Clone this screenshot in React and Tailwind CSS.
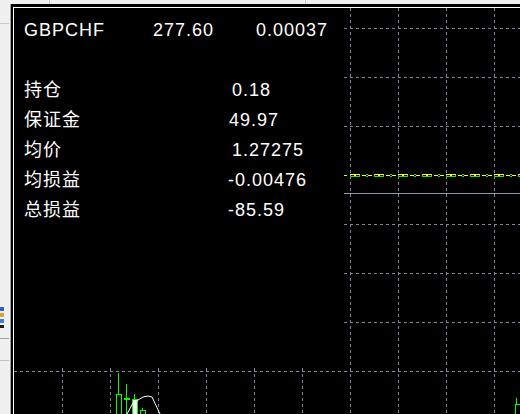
import React from "react";

const GRID = "#778899";

function Chart() {
  const vx = [48, 96, 144, 192, 240, 288, 336, 384, 432, 480];
  const hy = [20, 69, 118, 167, 216, 265, 314, 363];
  const marks = [];
  for (let i = 0; i < 8; i++) {
    const x0 = 336 + 24 * i;
    marks.push(
      <g key={i} shapeRendering="crispEdges">
        <rect x={x0} y={166} width={10} height={1} fill="#ffff00" />
        <rect x={x0} y={168} width={10} height={1} fill="#22dd22" />
        <rect x={x0} y={167} width={1} height={1} fill="#22dd22" />
        <rect x={x0 + 9} y={167} width={1} height={1} fill="#22dd22" />
        <rect x={x0 + 4} y={167} width={2} height={1} fill="#ffff00" />
        <rect x={x0 + 12} y={167} width={4} height={1} fill="#ffff00" />
        <rect x={x0 + 16} y={166} width={2} height={1} fill="#22dd22" />
        <rect x={x0 + 16} y={168} width={2} height={1} fill="#22dd22" />
        <rect x={x0 + 18} y={167} width={4} height={1} fill="#ffff00" />
      </g>
    );
  }
  return (
    <svg width="506" height="406" className="block" shapeRendering="crispEdges">
      {vx.map((x) => (
        <line key={"v" + x} x1={x + 0.5} y1={0} x2={x + 0.5} y2={406} stroke={GRID} strokeWidth="1" strokeDasharray="3 3" />
      ))}
      {hy.map((y) => (
        <line key={"h" + y} x1={0} y1={y + 0.5} x2={506} y2={y + 0.5} stroke={GRID} strokeWidth="1" strokeDasharray="3 3" />
      ))}
      <line x1={330} y1={185.5} x2={506} y2={185.5} stroke="#8a96a3" strokeWidth="1" />
      <rect x={336} y={166} width={170} height={3} fill="#000" />
      <rect x={330} y={167} width={3} height={1} fill="#ffff00" />
      {marks}
      {/* candles */}
      <line x1={104.5} y1={365} x2={104.5} y2={386} stroke="#00ff00" />
      <rect x={102.5} y={386.5} width={5} height={25} fill="none" stroke="#00ff00" />
      <line x1={112.5} y1={376} x2={112.5} y2={406} stroke="#00ff00" />
      <rect x={110} y={390} width={6} height={2} fill="#00ff00" />
      <line x1={120.5} y1={386} x2={120.5} y2={391} stroke="#00ff00" />
      <rect x={118.5} y={391.5} width={5} height={20} fill="#ffffff" stroke="#00ff00" />
      <line x1={128.5} y1={400} x2={128.5} y2={402} stroke="#00ff00" />
      <rect x={126.5} y={402.5} width={5} height={10} fill="none" stroke="#00ff00" />
      <line x1={502.5} y1={390} x2={502.5} y2={396} stroke="#00ff00" />
      <rect x={501.5} y={396.5} width={6} height={12} fill="none" stroke="#00ff00" />
      <polyline
        points="113,406 119,395 124,392 129,389 134,388 138,389 146,406"
        fill="none"
        stroke="#ffffff"
        strokeWidth="1"
        shapeRendering="auto"
      />
    </svg>
  );
}

const rows = [
  ["持仓", "0.18", "ml-[4px]"],
  ["保证金", "49.97", "ml-[1px]"],
  ["均价", "1.27275", "ml-[4px]"],
  ["均损益", "-0.00476", "ml-0"],
  ["总损益", "-85.59", "ml-0"],
];

export default function App() {
  return (
    <div className="w-[520px] h-[414px] overflow-hidden flex flex-col bg-[#f0f0f0] font-['Liberation_Sans','Noto_Sans_CJK_SC',sans-serif]">
      <div className="h-[4px] shrink-0 flex">
        <div className="w-[50px] border-r border-[#c8c8c8]" />
        <div className="w-[256px] border-r border-[#c8c8c8]" />
      </div>
      <div className="flex flex-1 min-h-0">
        <div className="w-[11px] shrink-0 flex flex-col border-r border-[#a0a0a0]">
          <div className="h-[19px]" />
          <div className="h-px w-[9px] bg-[#c8c8c8]" />
          <div className="h-[283px]" />
          <div className="flex flex-col gap-[2px] w-[4px]">
            <div className="h-[4px] bg-[#3060c0]" />
            <div className="h-[4px] bg-[#e0a030]" />
            <div className="h-[4px] bg-[#4080d0]" />
            <div className="h-[3px] bg-[#202020]" />
          </div>
          <div className="h-[10px]" />
          <div className="h-px w-[9px] bg-[#a0a0a0]" />
          <div className="h-[21px]" />
          <div className="h-px w-[9px] bg-[#c0c0c0]" />
        </div>
        <div className="flex-1 bg-black pl-[2px] pt-[3px] flex">
          <div className="flex-1 border-l border-t border-white relative">
            <Chart />
            <div className="absolute left-0 top-0 w-[330px] h-[359px] bg-black text-white text-[18px] leading-[30px] tracking-[1px] pl-[10px] pt-[7px] flex flex-col">
              <div className="flex">
                <span className="w-[129px]">GBPCHF</span>
                <span className="w-[103px]">277.60</span>
                <span>0.00037</span>
              </div>
              <div className="h-[30px]" />
              {rows.map(([label, value, ml]) => (
                <div key={label} className="flex">
                  <span className="w-[204px]">{label}</span>
                  <span className={ml}>{value}</span>
                </div>
              ))}
            </div>
          </div>
        </div>
      </div>
    </div>
  );
}
